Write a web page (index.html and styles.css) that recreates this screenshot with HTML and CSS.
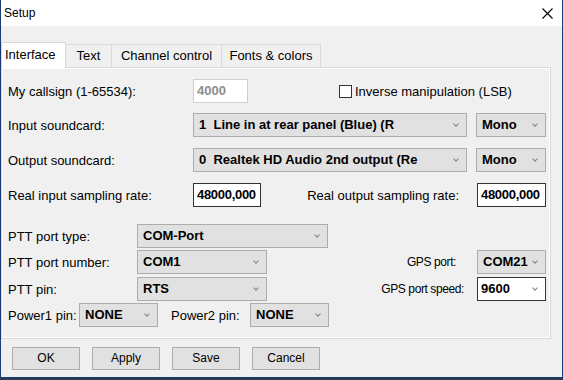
FILE: index.html
```html
<!DOCTYPE html>
<html lang="en">
<head>
    <meta charset="UTF-8">
    <title>Setup</title>
    <link rel="stylesheet" href="styles.css">
</head>
<body>
    <div class="window">
        <div class="titlebar">
            <span class="title">Setup</span>
            <svg class="close" width="11" height="11" viewBox="0 0 11 11">
                <path d="M0.5 0.5 L10.5 10.5 M10.5 0.5 L0.5 10.5" stroke="#000" stroke-width="1.1" fill="none"/>
            </svg>
        </div>

        <div class="tabs">
            <div class="tab active t-interface">Interface</div>
            <div class="tab t-text">Text</div>
            <div class="tab t-channel">Channel control</div>
            <div class="tab t-fonts">Fonts &amp; colors</div>
        </div>

        <div class="panel">
            <div class="row r1">
                <span class="lbl w185">My callsign (1-65534):</span>
                <div class="field dim w55">4000</div>
                <div class="check"><span class="box"></span>Inverse manipulation (LSB)</div>
            </div>
            <div class="row r2">
                <span class="lbl w185">Input soundcard:</span>
                <div class="select w274">1&nbsp; Line in at rear panel (Blue) (R</div>
                <div class="select w70 mono">Mono</div>
            </div>
            <div class="row r3">
                <span class="lbl w185">Output soundcard:</span>
                <div class="select w274">0&nbsp; Realtek HD Audio 2nd output (Re</div>
                <div class="select w70 mono">Mono</div>
            </div>
            <div class="row r4">
                <span class="lbl w185">Real input sampling rate:</span>
                <div class="field w68">48000,000</div>
                <span class="rlabel gap18">Real output sampling rate:</span>
                <div class="field w69">48000,000</div>
            </div>

            <div class="row r5">
                <span class="lbl w129">PTT port type:</span>
                <div class="select w191">COM-Port</div>
            </div>
            <div class="row r6">
                <span class="lbl w129">PTT port number:</span>
                <div class="select w130">COM1</div>
                <span class="rlabel small gap21">GPS port:</span>
                <div class="select w69">COM21</div>
            </div>
            <div class="row r7">
                <span class="lbl w129">PTT pin:</span>
                <div class="select w130">RTS</div>
                <span class="rlabel small gap13">GPS port speed:</span>
                <div class="select combo w69">9600</div>
            </div>
            <div class="row r8">
                <span class="lbl w71">Power1 pin:</span>
                <div class="select w79">NONE</div>
                <span class="lbl w79 ml13">Power2 pin:</span>
                <div class="select w79">NONE</div>
            </div>
        </div>

        <div class="buttons">
            <div class="btn">OK</div>
            <div class="btn">Apply</div>
            <div class="btn">Save</div>
            <div class="btn">Cancel</div>
        </div>
    </div>
</body>
</html>
```

FILE: styles.css
```css
*, *::before, *::after {
    box-sizing: border-box;
}
body {
    margin: 0;
    padding: 0;
    background-color: #2c3b4c;
    font-family: "Liberation Sans", Arial, sans-serif;
    font-size: 13px;
    color: #000;
}
.window {
    width: 563px;
    height: 378px;
    background-color: #f0f0f0;
    border-left: 1px solid #1d3a78;
    border-right: 1px solid #1d3a78;
    border-bottom: 1px solid #1d3a78;
}

/* title bar */
.titlebar {
    height: 26px;
    background-color: #fff;
    display: flex;
    align-items: center;
    justify-content: space-between;
    padding: 0 9px 0 3px;
}
.title {
    font-size: 12px;
}

/* tabs */
.tabs {
    display: flex;
    align-items: flex-end;
    height: 25px;
    margin-top: 16px;
    position: relative;
    z-index: 1;
}
.tab {
    height: 23px;
    border: 1px solid #d9d9d9;
    border-bottom: none;
    background-color: #f0f0f0;
    text-align: center;
    line-height: 22px;
    margin-left: -1px;
}
.tab.active {
    height: 26px;
    margin-bottom: -1px;
    margin-left: 0;
    background-color: #fff;
    line-height: 22px;
    padding-top: 1px;
    text-align: left;
    padding-left: 3px;
}
.t-interface { width: 65px; }
.t-text { width: 47px; }
.t-channel { width: 111px; }
.t-fonts { width: 100px; }

/* panel */
.panel {
    width: 550px;
    height: 272px;
    border: 1px solid #d9d9d9;
    box-shadow: inset 0 0 0 1px #fff;
    padding: 11px 4px 0 6px;
}
.row {
    display: flex;
    align-items: center;
    height: 24px;
}
.r2 { margin-top: 10px; }
.r3 { margin-top: 11px; }
.r4 { margin-top: 11px; }
.r5 { margin-top: 17px; }
.r6 { margin-top: 2px; }
.r7 { margin-top: 3px; }
.r8 { margin-top: 2px; }

.lbl { flex-shrink: 0; }
.w185 { width: 185px; }
.w129 { width: 129px; }
.w71 { width: 71px; }
.ml13 { margin-left: 13px; }

.rlabel {
    flex: 1;
    text-align: right;
}
.rlabel.small {
    font-size: 12px;
    letter-spacing: -0.4px;
}
.gap18 { margin-right: 18px; }
.gap21 { margin-right: 21px; }
.gap13 { margin-right: 13px; }

.w55 { width: 55px; }
.w68 { width: 68px; }
.w69 { width: 69px; }
.w70 { width: 70px; }
.w79 { width: 79px; }
.w130 { width: 130px; }
.w191 { width: 191px; }
.w274 { width: 274px; }

/* inputs */
.field {
    height: 24px;
    background-color: #fff;
    border: 1px solid #333;
    font-weight: bold;
    line-height: 22px;
    padding-left: 3px;
    letter-spacing: -0.3px;
    white-space: nowrap;
    overflow: hidden;
}
.field.dim {
    border-color: #cfcfcf;
    color: #8c8c8c;
    letter-spacing: 0;
}

.select {
    position: relative;
    height: 24px;
    background-color: #e1e1e1;
    border: 1px solid #adadad;
    font-weight: bold;
    line-height: 22px;
    padding-left: 5px;
    white-space: nowrap;
    overflow: hidden;
    flex-shrink: 0;
}
.select::after {
    content: "";
    position: absolute;
    right: 8px;
    top: 8px;
    width: 4px;
    height: 4px;
    border-right: 1px solid #808080;
    border-bottom: 1px solid #808080;
    transform: rotate(45deg);
}
.r2 .select.mono, .r3 .select.mono { margin-left: 9px; }
.select.combo {
    background-color: #fff;
    border-color: #333;
    padding-left: 3px;
}

/* checkbox */
.check {
    display: flex;
    align-items: center;
    margin-left: 91px;
}
.check .box {
    width: 13px;
    height: 13px;
    border: 1px solid #333;
    background-color: #fff;
    margin-right: 3px;
}

/* dialog buttons */
.buttons {
    display: flex;
    gap: 12px;
    margin-top: 8px;
    padding-left: 11px;
}
.btn {
    width: 68px;
    height: 23px;
    background-color: #e1e1e1;
    border: 1px solid #adadad;
    text-align: center;
    line-height: 21px;
    font-size: 12px;
}
```
